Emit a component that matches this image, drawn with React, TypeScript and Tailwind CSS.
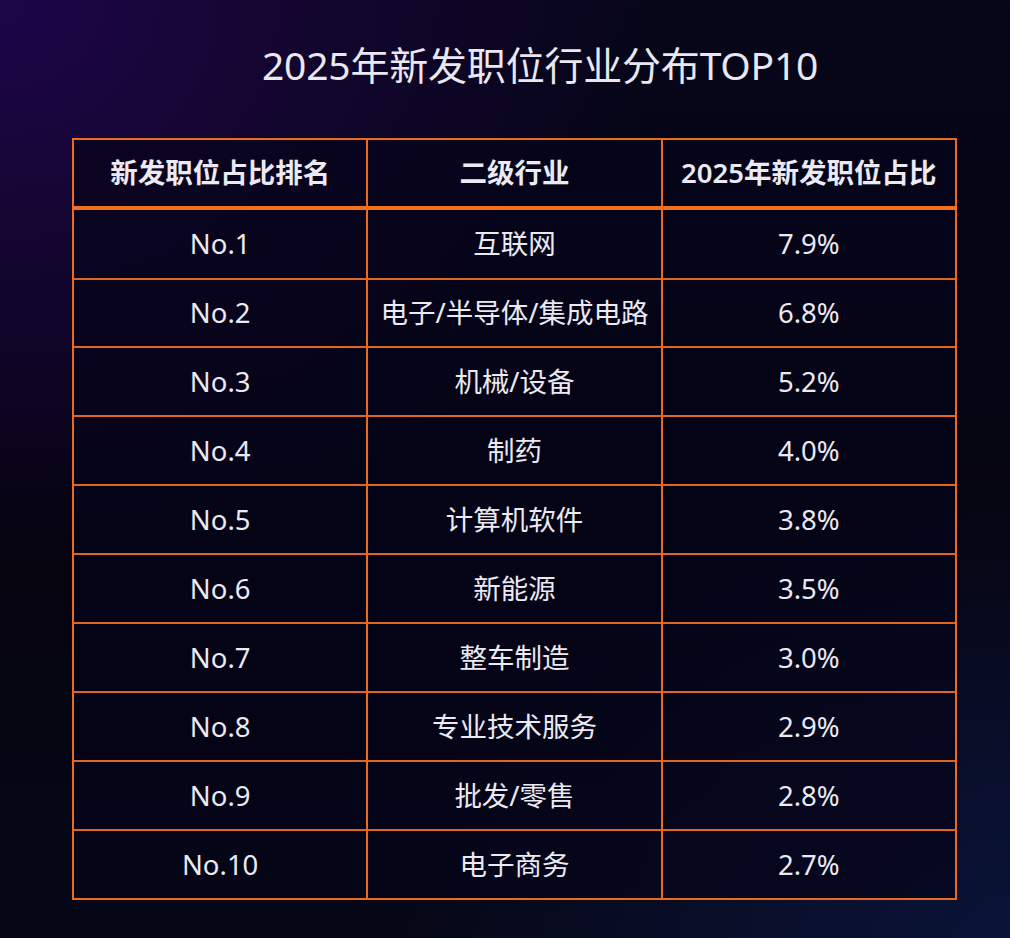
import React from 'react';

const rows: [string, string, string][] = [
  ['No.1', '互联网', '7.9%'],
  ['No.2', '电子/半导体/集成电路', '6.8%'],
  ['No.3', '机械/设备', '5.2%'],
  ['No.4', '制药', '4.0%'],
  ['No.5', '计算机软件', '3.8%'],
  ['No.6', '新能源', '3.5%'],
  ['No.7', '整车制造', '3.0%'],
  ['No.8', '专业技术服务', '2.9%'],
  ['No.9', '批发/零售', '2.8%'],
  ['No.10', '电子商务', '2.7%'],
];

const App: React.FC = () => {
  return (
    <div className="w-[1010px] h-[938px] overflow-hidden flex flex-col items-start pl-[72px] bg-[radial-gradient(ellipse_65%_60%_at_0%_0%,#1e0649_0%,#13052f_45%,transparent_100%),radial-gradient(ellipse_60%_50%_at_100%_100%,#0b1438_0%,transparent_100%),linear-gradient(180deg,#07061a_0%,#05040f_60%,#060817_100%)] font-['Noto_Sans','Noto_Sans_CJK_SC',sans-serif] text-[#ebe9f2]">
      <h1 className="ml-[190px] pt-[37px] text-[39px] leading-[55px] font-normal tracking-[-0.2px] text-[#e9e7f0]">
        2025年新发职位行业分布TOP10
      </h1>

      <table className="mt-[46px] w-[885px] h-[762px] table-fixed border-collapse border-2 border-[#ec6a1d] bg-[#05041a]/70">
        <thead>
          <tr className="h-[69px] border-b-[4px] border-[#f0701e]">
            <th className="border-x-2 border-[#ec6a1d] text-[27.5px] font-semibold">新发职位占比排名</th>
            <th className="border-x-2 border-[#ec6a1d] text-[27.5px] font-semibold">二级行业</th>
            <th className="border-x-2 border-[#ec6a1d] text-[27.5px] font-semibold">2025年新发职位占比</th>
          </tr>
        </thead>
        <tbody>
          {rows.map(([rank, name, pct]) => (
            <tr key={rank} className="border-t-2 border-[#e2651f]">
              <td className="border-x-2 border-[#ec6a1d] text-center text-[27.5px]">{rank}</td>
              <td className="border-x-2 border-[#ec6a1d] text-center text-[27.5px]">{name}</td>
              <td className="border-x-2 border-[#ec6a1d] text-center text-[27.5px]">{pct}</td>
            </tr>
          ))}
        </tbody>
      </table>
    </div>
  );
};

export default App;
